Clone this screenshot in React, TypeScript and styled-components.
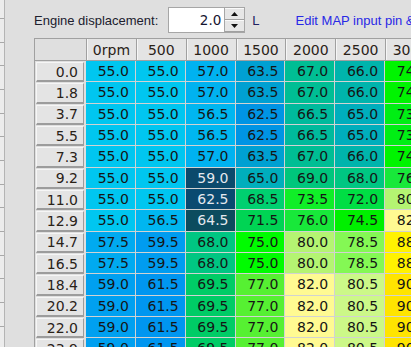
import React from 'react';
import styled, { createGlobalStyle } from 'styled-components';

const GlobalStyle = createGlobalStyle`
  html, body { margin: 0; padding: 0; background: #dfdfdf; overflow: hidden; }
  body { font-family: "Liberation Sans", Arial, sans-serif; }
`;

const Window = styled.div`
  display: flex;
  width: 411px;
  height: 347px;
  overflow: hidden;
  background: #dfdfdf;
`;

const SideList = styled.div`
  flex: 0 0 4px;
  background: #ececec;
  border-right: 1px solid #b4b4b4;
  display: flex;
  flex-direction: column;
  overflow: hidden;
`;

const SideItem = styled.div<{ $h: number }>`
  flex: 0 0 ${p => p.$h}px;
  box-sizing: border-box;
  border-bottom: 1px solid #a8a8a8;
`;

const Main = styled.div`
  flex: 1;
  min-width: 0;
  padding-left: 29px;
  display: flex;
  flex-direction: column;
  overflow: hidden;
`;

const Toolbar = styled.div`
  flex: 0 0 38px;
  height: 38px;
  box-sizing: border-box;
  padding-top: 2px;
  display: flex;
  align-items: center;
  white-space: nowrap;
  font-size: 13px;
`;

const Label = styled.span`
  color: #20202e;
`;

const SpinBox = styled.div`
  margin-left: 10px;
  display: flex;
  height: 26px;
  box-sizing: border-box;
  border: 1px solid #a6a6a6;
  background: #ffffff;
`;

const SpinInput = styled.div`
  width: 55px;
  box-sizing: border-box;
  padding-right: 3px;
  display: flex;
  align-items: center;
  justify-content: flex-end;
  font-family: "DejaVu Sans", Verdana, sans-serif;
  font-size: 13.5px;
  color: #151530;
`;

const SpinButtons = styled.div`
  width: 19px;
  display: flex;
  flex-direction: column;
  border-left: 1px solid #a6a6a6;
`;

const SpinButton = styled.div`
  flex: 1;
  display: flex;
  align-items: center;
  justify-content: center;
  background: #e6e6e6;
  border-top: 1px solid #fafafa;
  border-bottom: 1px solid #a0a0a0;
`;

const Unit = styled.span`
  margin-left: 7px;
  color: #202060;
`;

const Link = styled.span`
  margin-left: 36px;
  color: #2828e6;
`;

const Table = styled.div`
  flex: 0 0 auto;
  display: grid;
  grid-template-columns: 51px repeat(7, 49.85px);
  grid-template-rows: 22px;
  grid-auto-rows: 21.33px;
  border-top: 1px solid #a0a0a0;
  border-left: 1px solid #a0a0a0;
  width: max-content;
  font-family: "DejaVu Sans", Verdana, sans-serif;
  font-size: 14px;
`;

const Corner = styled.div`
  border-bottom: 1px solid #a0a0a0;
`;

const HeadCell = styled.div`
  display: flex;
  align-items: center;
  justify-content: center;
  background: #e4e4e4;
  border-left: 1px solid #a0a0a0;
  border-bottom: 1px solid #a0a0a0;
  box-shadow: inset 1px 0 0 #f6f6f6;
  color: #2a2218;
`;

const RowHeadCell = styled.div`
  box-sizing: border-box;
  padding: 1px 2px 0 1px;
  display: flex;
`;

const RowHeadButton = styled.div`
  flex: 1;
  display: flex;
  align-items: center;
  justify-content: flex-end;
  padding-right: 5px;
  background: #e4e4e4;
  border-top: 1px solid #f6f6f6;
  border-left: 1px solid #f6f6f6;
  border-right: 1px solid #9c9c9c;
  border-bottom: 2px solid #9c9c9c;
  color: #2a2218;
`;

const DataCell = styled.div<{ $bg: string; $dark?: boolean }>`
  display: flex;
  align-items: center;
  justify-content: flex-end;
  padding-right: 6px;
  background: ${p => p.$bg};
  border-right: 1px solid #d2d2d2;
  border-bottom: 1px solid #d2d2d2;
  color: ${p => (p.$dark ? '#e4e8ee' : '#151515')};
`;

const cols = ['0rpm', '500', '1000', '1500', '2000', '2500', '3000'];

const rows: { label: string; v: number[] }[] = [
  { label: '0.0', v: [55.0, 55.0, 57.0, 63.5, 67.0, 66.0, 74.0] },
  { label: '1.8', v: [55.0, 55.0, 57.0, 63.5, 67.0, 66.0, 74.0] },
  { label: '3.7', v: [55.0, 55.0, 56.5, 62.5, 66.5, 65.0, 73.0] },
  { label: '5.5', v: [55.0, 55.0, 56.5, 62.5, 66.5, 65.0, 73.0] },
  { label: '7.3', v: [55.0, 55.0, 57.0, 63.5, 67.0, 66.0, 74.0] },
  { label: '9.2', v: [55.0, 55.0, 59.0, 65.0, 69.0, 68.0, 76.0] },
  { label: '11.0', v: [55.0, 55.0, 62.5, 68.5, 73.5, 72.0, 80.0] },
  { label: '12.9', v: [55.0, 56.5, 64.5, 71.5, 76.0, 74.5, 82.0] },
  { label: '14.7', v: [57.5, 59.5, 68.0, 75.0, 80.0, 78.5, 88.0] },
  { label: '16.5', v: [57.5, 59.5, 68.0, 75.0, 80.0, 78.5, 88.0] },
  { label: '18.4', v: [59.0, 61.5, 69.5, 77.0, 82.0, 80.5, 90.0] },
  { label: '20.2', v: [59.0, 61.5, 69.5, 77.0, 82.0, 80.5, 90.0] },
  { label: '22.0', v: [59.0, 61.5, 69.5, 77.0, 82.0, 80.5, 90.0] },
  { label: '23.9', v: [59.0, 61.5, 69.5, 77.0, 82.0, 80.5, 90.0] },
];

const highlighted: Record<string, string> = {
  '5-2': '#0b4a6c',
  '6-2': '#0a4a70',
  '7-2': '#0c4c5e',
};

const palette: Record<string, string> = {
  '55.0': '#00c6f0',
  '56.5': '#00b6f0',
  '57.0': '#00b2f0',
  '57.5': '#00aaf0',
  '59.0': '#00a0f0',
  '59.5': '#009cf0',
  '61.5': '#0096f0',
  '62.5': '#0094e4',
  '63.5': '#00a0d2',
  '65.0': '#00aebc',
  '66.0': '#00b4ac',
  '66.5': '#00ba9c',
  '67.0': '#00be94',
  '68.0': '#00c682',
  '68.5': '#00d070',
  '69.0': '#00c67c',
  '69.5': '#00cc66',
  '71.5': '#00d454',
  '72.0': '#00de44',
  '73.0': '#00ee14',
  '73.5': '#10ee28',
  '74.0': '#00f400',
  '74.5': '#00f000',
  '75.0': '#00fc00',
  '76.0': '#18e83a',
  '77.0': '#56f032',
  '78.5': '#84f854',
  '80.0': '#b4f472',
  '80.5': '#ccf888',
  '82.0': '#fffa92',
  '88.0': '#fff200',
  '90.0': '#ffe400',
};

const sideHeights = [19, 23.67, 23.67, 23.67, 23.67, 23.67, 23.67, 23.67, 23.67, 23.67, 23.67, 23.67, 23.67, 23.67, 23.67];

export default function App() {
  return (
    <>
      <GlobalStyle />
      <Window>
        <SideList>
          {sideHeights.map((h, i) => (
            <SideItem key={i} $h={h} />
          ))}
        </SideList>
        <Main>
          <Toolbar>
            <Label>Engine displacement:</Label>
            <SpinBox>
              <SpinInput>2.0</SpinInput>
              <SpinButtons>
                <SpinButton>
                  <svg width="7" height="4" viewBox="0 0 7 4">
                    <path d="M0 4 L3.5 0 L7 4 Z" fill="#111" />
                  </svg>
                </SpinButton>
                <SpinButton>
                  <svg width="7" height="4" viewBox="0 0 7 4">
                    <path d="M0 0 L3.5 4 L7 0 Z" fill="#111" />
                  </svg>
                </SpinButton>
              </SpinButtons>
            </SpinBox>
            <Unit>L</Unit>
            <Link>Edit MAP input pin &amp; sensor settings</Link>
          </Toolbar>
          <Table>
            <Corner />
            {cols.map(c => (
              <HeadCell key={c}>{c}</HeadCell>
            ))}
            {rows.map((r, ri) => (
              <React.Fragment key={r.label}>
                <RowHeadCell>
                  <RowHeadButton>{r.label}</RowHeadButton>
                </RowHeadCell>
                {r.v.map((v, ci) => {
                  const key = v.toFixed(1);
                  const hl = highlighted[`${ri}-${ci}`];
                  return (
                    <DataCell key={ci} $bg={hl || palette[key] || '#ccc'} $dark={!!hl}>
                      {key}
                    </DataCell>
                  );
                })}
              </React.Fragment>
            ))}
          </Table>
        </Main>
      </Window>
    </>
  );
}
